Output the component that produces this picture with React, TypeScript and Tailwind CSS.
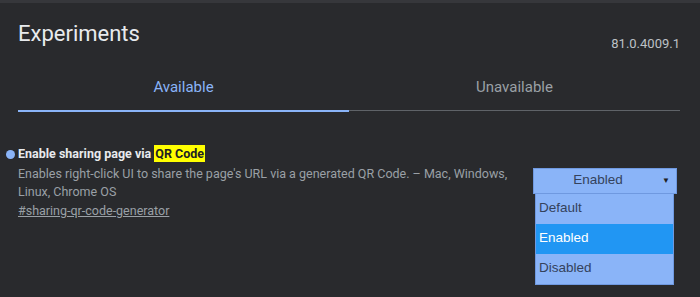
import React from "react";

const options = ["Default", "Enabled", "Disabled"];

function FlagSelect() {
    const selected = "Enabled";
    return (
        <div className="relative w-[144px] mt-[23px] mr-[23px] shrink-0">
            <div className="h-[26px] bg-[#8ab4f8] border border-[#6f99e0] flex items-center justify-center pr-[14px] relative text-[13.5px] text-[#34425c] font-['Liberation_Sans',Arial,sans-serif]">
                <span>Enabled</span>
                <span className="absolute right-[6px] top-[6px] text-[8px] text-[#202124]">▼</span>
            </div>
            <ul className="absolute left-[2px] top-[25px] w-[139px] bg-[#8ab4f8] border border-[#6f99e0] z-10 font-['Liberation_Sans',Arial,sans-serif] text-[13.5px]">
                {options.map((o) => (
                    <li
                        key={o}
                        className={
                            o === selected
                                ? "h-[30px] flex items-center pl-[3px] bg-[#2196f3] text-white"
                                : "h-[30px] flex items-center pl-[3px] text-[#34425c]"
                        }
                    >
                        {o}
                    </li>
                ))}
            </ul>
        </div>
    );
}

export default function App() {
    return (
        <div className="w-[700px] h-[297px] bg-[#292a2d] border-t-[3px] border-[#36373b] overflow-hidden font-['Roboto','Liberation_Sans',sans-serif]">
            <div className="flex justify-between items-start px-[18px] pt-[17px]">
                <h1 className="text-[22px] leading-[28px] text-[#e8eaed]">Experiments</h1>
                <span className="text-[13px] text-[#bdc1c6] mt-[14px] mr-[2px]">81.0.4009.1</span>
            </div>

            <div className="flex mx-[18px] mt-[22px] w-[662px]">
                <div className="flex-1 flex flex-col items-center">
                    <span className="text-[15px] leading-[20px] text-[#8ab4f8] h-[28px] mt-[1px]">Available</span>
                    <div className="w-full h-[2px] bg-[#8ab4f8] mt-[5px]"></div>
                </div>
                <div className="flex-1 flex flex-col items-center">
                    <span className="text-[15px] leading-[20px] text-[#9aa0a6] h-[28px] mt-[1px]">Unavailable</span>
                    <div className="w-full h-[1px] bg-[#5f6368] mt-[5px] mb-[1px]"></div>
                </div>
            </div>

            <div className="flex justify-between mt-[33px]">
                <div className="flex">
                    <div className="w-[12px] pl-[6px] pt-[5px] shrink-0">
                        <div className="w-[9px] h-[9px] rounded-full bg-[#8ab4f8]"></div>
                    </div>
                    <div className="w-[500px] pl-[6px]">
                        <h2 className="text-[12.5px] leading-[18px] font-bold text-[#e8eaed]">
                            Enable sharing page via{" "}
                            <mark className="bg-[#ffff00] text-[#202124] px-[1px] py-[1px]">QR Code</mark>
                        </h2>
                        <p className="text-[12.5px] leading-[18.5px] text-[#9aa0a6] mt-[2px]">
                            Enables right-click UI to share the page's URL via a generated QR Code. – Mac, Windows,
                            <br />
                            Linux, Chrome OS
                        </p>
                        <a className="block text-[12.5px] leading-[18.5px] text-[#9aa0a6] underline">
                            #sharing-qr-code-generator
                        </a>
                    </div>
                </div>
                <FlagSelect />
            </div>
        </div>
    );
}
